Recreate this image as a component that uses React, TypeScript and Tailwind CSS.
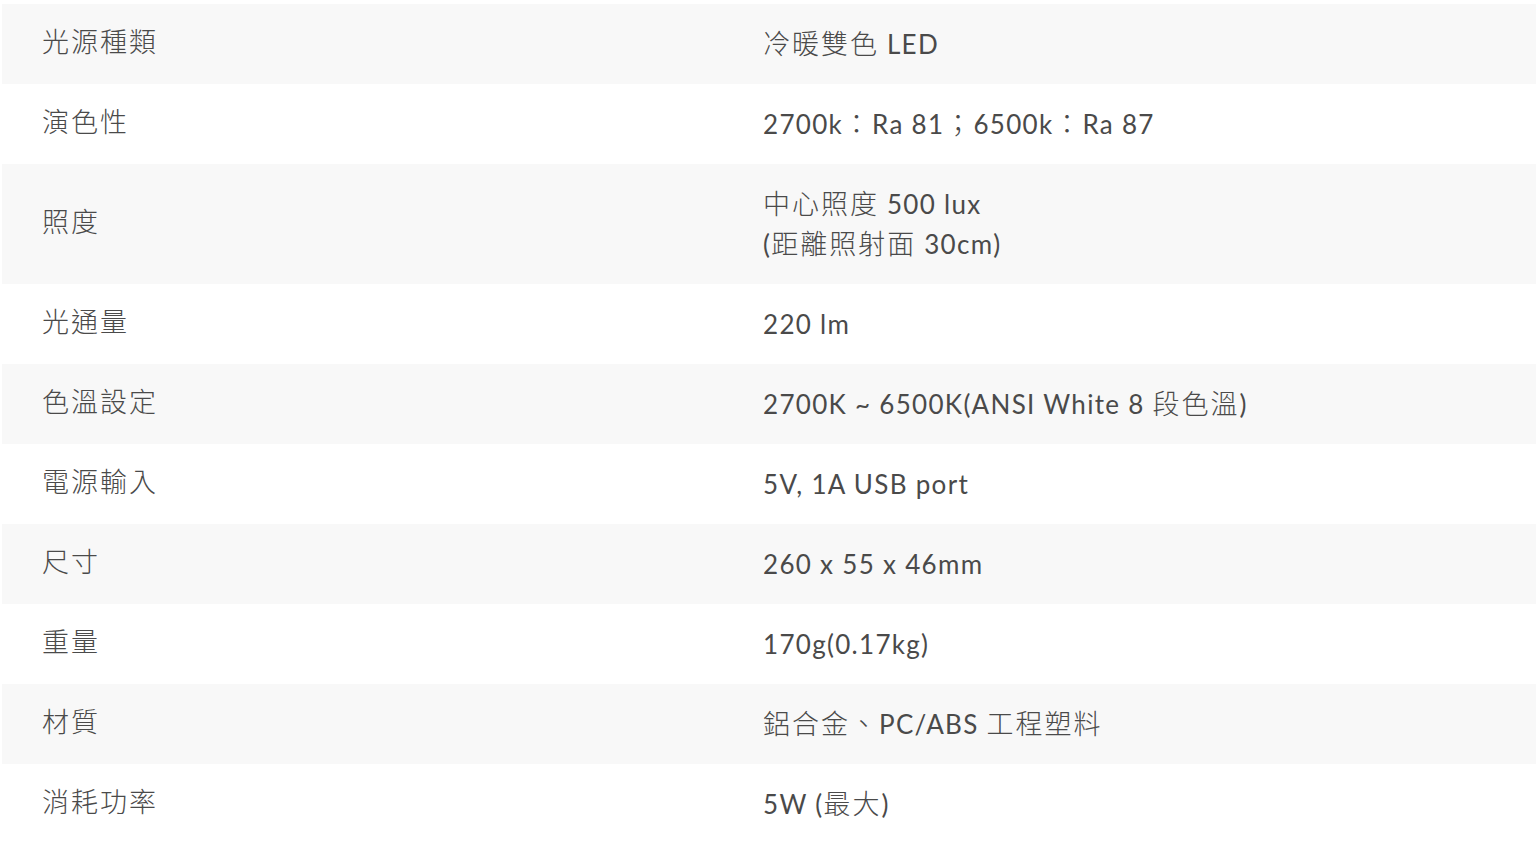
const specs: { label: string; value: string[]; tall?: boolean }[] = [
  { label: '光源種類', value: ['冷暖雙色 LED'] },
  { label: '演色性', value: ['2700k：Ra 81；6500k：Ra 87'] },
  { label: '照度', value: ['中心照度 500 lux', '(距離照射面 30cm)'], tall: true },
  { label: '光通量', value: ['220 lm'] },
  { label: '色溫設定', value: ['2700K ~ 6500K(ANSI White 8 段色溫)'] },
  { label: '電源輸入', value: ['5V, 1A USB port'] },
  { label: '尺寸', value: ['260 x 55 x 46mm'] },
  { label: '重量', value: ['170g(0.17kg)'] },
  { label: '材質', value: ['鋁合金、PC/ABS 工程塑料'] },
  { label: '消耗功率', value: ['5W (最大)'] },
];

// CJK runs get their own size, spacing and weight, Latin stays as is
function Mixed({ text }: { text: string }) {
  const parts = text.split(/([\u3000-\u9fff\uff00-\uffef]+)/);
  return (
    <>
      {parts.map((p, i) =>
        i % 2 === 1 ? (
          <span key={i} className="text-[27px] font-light tracking-[2px]">
            {p}
          </span>
        ) : (
          <span key={i}>{p}</span>
        )
      )}
    </>
  );
}

export default function App() {
  return (
    <div
      className="min-h-screen bg-white pt-1 pl-[2px] text-[#4a4a4a]"
      style={{ fontFamily: 'Lato, "Noto Sans CJK TC", sans-serif' }}
    >
      <div className="flex flex-col">
        {specs.map((row, i) => (
          <div
            key={row.label}
            className={`grid grid-cols-[721px_1fr] items-center text-[26px] leading-[40px] tracking-[0.05em] ${
              row.tall ? 'h-[120px]' : 'h-[80px]'
            } ${i % 2 === 0 ? 'bg-[#f8f8f8]' : 'bg-white'}`}
          >
            <div className="pl-10 -mt-1">
              <Mixed text={row.label} />
            </div>
            <div className="pl-10">
              {row.value.map((line) => (
                <div key={line}>
                  <Mixed text={line} />
                </div>
              ))}
            </div>
          </div>
        ))}
      </div>
    </div>
  );
}
